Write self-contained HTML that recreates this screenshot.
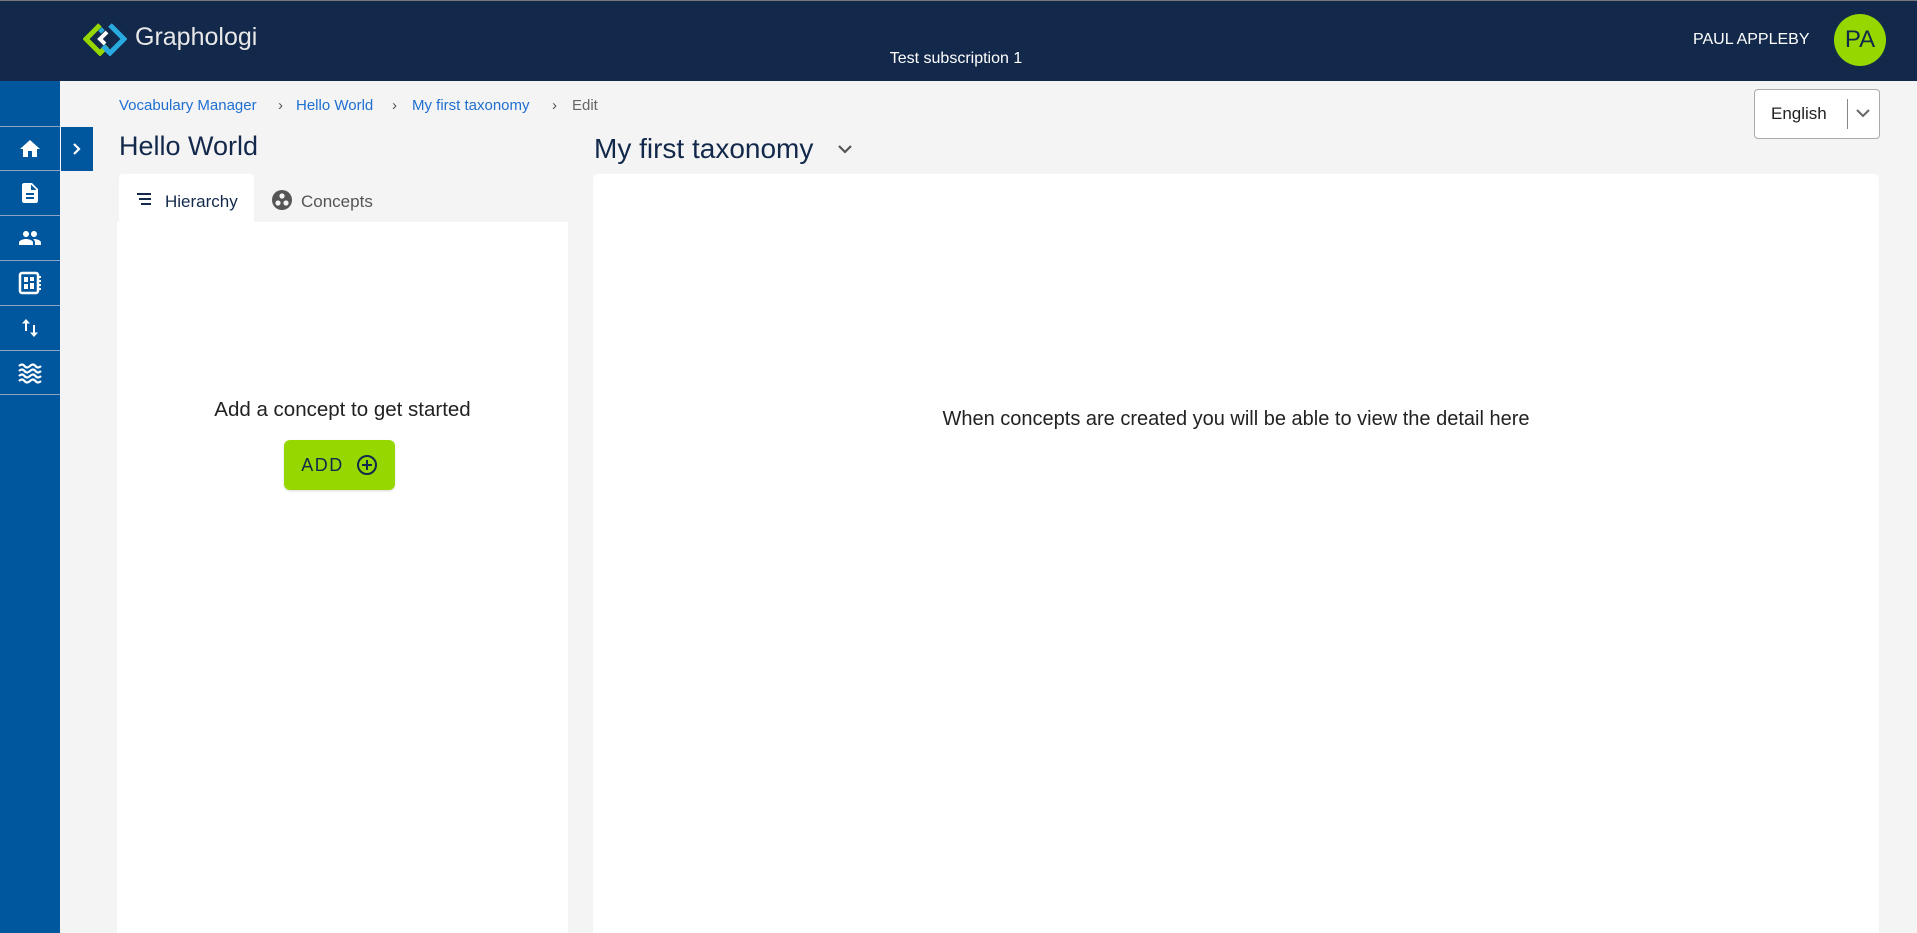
<!DOCTYPE html>
<html><head><meta charset="utf-8"><style>
*{margin:0;padding:0;box-sizing:border-box}
body{width:1917px;height:933px;overflow:hidden;background:#f4f4f4;font-family:"Liberation Sans",sans-serif;position:relative}
.abs{position:absolute}
#hdr{left:0;top:0;width:1917px;height:81px;background:#13294b;border-top:1px solid #777}
#side{left:0;top:81px;width:60px;height:852px;background:#00579e}
.row{position:absolute;left:0;width:60px;height:45px;border-top:1px solid #8aa6c4;display:flex;align-items:center;justify-content:center}
.bc{top:97px;font-size:15px;color:#1f6fd1}
.sep{color:#555}
</style></head><body>
<div id="hdr" class="abs">
  <svg class="abs" style="left:83px;top:21px" width="44" height="34" viewBox="0 0 44 34">
    <path d="M17 3 L3 17 L17 31 L24 24" fill="none" stroke="#97d700" stroke-width="5"/>
    <path d="M20 10 L17 7 M27 3 L41 17 L27 31 L20 24" fill="none" stroke="#29abe2" stroke-width="5"/>
    <path d="M24 10 L17 17 L22 22" fill="none" stroke="#fff" stroke-width="4"/>
  </svg>
  <div class="abs" style="left:135px;top:22px;font-size:25px;color:#e8e8e8">Graphologi</div>
  <div class="abs" style="left:0;width:1912px;text-align:center;top:49px;font-size:16px;color:#fff">Test subscription 1</div>
  <div class="abs" style="left:1693px;top:30px;font-size:16px;color:#fff">PAUL APPLEBY</div>
  <div class="abs" style="left:1834px;top:13px;width:52px;height:52px;border-radius:50%;background:#97d700;color:#13294b;font-size:24px;text-align:center;line-height:52px">PA</div>
</div>
<div id="side" class="abs">
  <div class="row" style="top:45px"><svg width="24" height="24" viewBox="0 0 24 24"><path d="M10 20v-6h4v6h5v-8h3L12 3 2 12h3v8z" fill="#fff"/></svg></div>
  <div class="row" style="top:89px"><svg width="24" height="24" viewBox="0 0 24 24"><path d="M14 2H6c-1.1 0-2 .9-2 2v16c0 1.1.9 2 2 2h12c1.1 0 2-.9 2-2V8l-6-6zm2 16H8v-2h8v2zm0-4H8v-2h8v2zm-3-5V3.5L18.5 9H13z" fill="#fff"/></svg></div>
  <div class="row" style="top:134px"><svg width="28" height="24" viewBox="0 0 24 24"><path d="M16 11c1.66 0 2.99-1.34 2.990-3S17.66 5 16 5s-3 1.34-3 3 1.34 3 3 3zm-8 0c1.66 0 2.99-1.34 2.99-3S9.66 5 8 5 5 6.34 5 8s1.34 3 3 3zm0 2c-2.33 0-7 1.17-7 3.5V19h14v-2.5c0-2.33-4.67-3.5-7-3.5zm8 0c-.29 0-.62.02-.97.05 1.16.84 1.970 1.97 1.97 3.45V19h6v-2.5c0-2.33-4.67-3.5-7-3.5z" fill="#fff"/></svg></div>
  <div class="row" style="top:179px"><svg width="26" height="26" viewBox="0 0 26 26"><rect x="3" y="3" width="18" height="20" rx="2" fill="none" stroke="#fff" stroke-width="2.5"/><rect x="7" y="7" width="4" height="5" fill="#fff"/><rect x="7" y="14" width="4" height="5" fill="#fff"/><rect x="13" y="7" width="4" height="4" fill="#fff"/><rect x="13" y="13" width="4" height="6" fill="#fff"/><path d="M22 7h2M22 11h2M22 15h2M22 19h2" stroke="#fff" stroke-width="2"/></svg></div>
  <div class="row" style="top:224px"><svg width="24" height="24" viewBox="0 0 24 24"><path d="M8 3L4 7.5h3V15h2V7.5h3zM16 21l4-4.5h-3V9h-2v7.5h-3z" fill="#fff"/></svg></div>
  <div class="row" style="top:269px;border-bottom:1px solid #8aa6c4"><svg width="26" height="24" viewBox="0 0 26 24"><path d="M2 5q3-3 5.5 0t5.5 0 5.5 0 5.5 0M2 10q3-3 5.5 0t5.5 0 5.5 0 5.5 0M2 15q3-3 5.5 0t5.5 0 5.5 0 5.5 0M2 20q3-3 5.5 0t5.5 0 5.5 0 5.5 0" fill="none" stroke="#fff" stroke-width="2.2"/></svg></div>
</div>
<div class="abs" style="left:61px;top:127px;width:32px;height:44px;background:#00579e;display:flex;align-items:center;justify-content:center"><svg width="14" height="14" viewBox="0 0 14 14"><path d="M4 2l5 5-5 5" fill="none" stroke="#fff" stroke-width="2.2"/></svg></div>

<div class="abs bc" style="left:119px">Vocabulary Manager</div>
<div class="abs bc sep" style="left:278px">›</div>
<div class="abs bc" style="left:296px">Hello World</div>
<div class="abs bc sep" style="left:392px">›</div>
<div class="abs bc" style="left:412px">My first taxonomy</div>
<div class="abs bc sep" style="left:552px">›</div>
<div class="abs bc" style="left:572px;color:#666">Edit</div>

<div class="abs" style="left:119px;top:131px;font-size:27px;color:#13294b">Hello World</div>
<div class="abs" style="left:594px;top:133px;font-size:28px;color:#13294b">My first taxonomy</div>
<svg class="abs" style="left:836px;top:143px" width="18" height="12" viewBox="0 0 18 12"><path d="M3 3l6 6 6-6" fill="none" stroke="#555" stroke-width="2.2"/></svg>

<div class="abs" style="left:119px;top:174px;width:135px;height:50px;background:#fff;border-radius:4px 4px 0 0"></div>
<svg class="abs" style="left:136px;top:192px" width="16" height="14" viewBox="0 0 16 14"><path d="M1 2h14M3 7h12M5 12h10" stroke="#13294b" stroke-width="2"/></svg>
<div class="abs" style="left:165px;top:192px;font-size:17px;color:#13294b">Hierarchy</div>
<svg class="abs" style="left:271px;top:189px" width="22" height="22" viewBox="0 0 22 22"><circle cx="11" cy="11" r="10" fill="#555"/><circle cx="11" cy="7" r="2.6" fill="#f4f4f4"/><circle cx="7" cy="14" r="2.6" fill="#f4f4f4"/><circle cx="15" cy="14" r="2.6" fill="#f4f4f4"/></svg>
<div class="abs" style="left:301px;top:192px;font-size:17px;color:#555">Concepts</div>

<div class="abs" style="left:117px;top:222px;width:451px;height:711px;background:#fff"></div>
<div class="abs" style="left:117px;width:451px;top:398px;text-align:center;font-size:20.5px;color:#222">Add a concept to get started</div>
<div class="abs" style="left:284px;top:440px;width:111px;height:50px;background:#97d700;border-radius:6px;display:flex;align-items:center;justify-content:center;gap:12px;font-size:18px;color:#13294b;letter-spacing:1.5px;box-shadow:0 1px 2px rgba(0,0,0,.15)">ADD <svg width="22" height="22" viewBox="0 0 22 22"><circle cx="11" cy="11" r="9" fill="none" stroke="#13294b" stroke-width="2"/><path d="M11 6v10M6 11h10" stroke="#13294b" stroke-width="2"/></svg></div>

<div class="abs" style="left:593px;top:174px;width:1286px;height:759px;background:#fff;border-radius:5px 5px 0 0"></div>
<div class="abs" style="left:593px;width:1286px;top:408px;text-align:center;font-size:20px;color:#222">When concepts are created you will be able to view the detail here</div>

<div class="abs" style="left:1754px;top:89px;width:126px;height:50px;background:#fff;border:1px solid #aaa;border-radius:4px"></div>
<div class="abs" style="left:1771px;top:104px;font-size:17px;color:#222">English</div>
<div class="abs" style="left:1847px;top:99px;width:1px;height:30px;background:#888"></div>
<svg class="abs" style="left:1855px;top:107px" width="16" height="12" viewBox="0 0 16 12"><path d="M2 3l6 6 6-6" fill="none" stroke="#666" stroke-width="2"/></svg>
</body></html>
